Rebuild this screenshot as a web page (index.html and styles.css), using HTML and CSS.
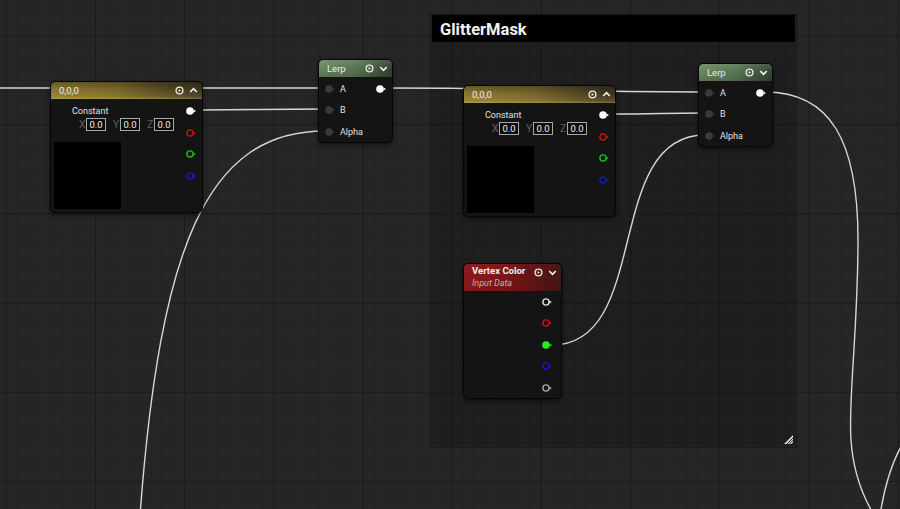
FILE: index.html
```html
<!DOCTYPE html>
<html>
<head>
<meta charset="utf-8">
<link rel="stylesheet" href="styles.css">
</head>
<body>
<div class="graph">
  <div class="group">
    <div class="group-head">GlitterMask</div>
    <svg class="grip" width="11" height="11" viewBox="0 0 11 11">
      <path d="M10 1 L10 10 L1 10 Z" fill="#d8d8d8"/>
      <path d="M3 11 L11 3 M5.5 11 L11 5.5 M8 11 L11 8" stroke="#1d1d1d" stroke-width="1"/>
    </svg>
  </div>

  <svg class="wires" width="900" height="509" viewBox="0 0 900 509">
    <g fill="none" stroke="#d6d6d6" stroke-width="1.4">
      <path d="M-10 88 L325 88"/>
      <path d="M196 110 C260 110 260 109 325 109"/>
      <path d="M325 131 C205 131 160 250 140 515"/>
      <path d="M386 88 C550 88 550 92 705 92"/>
      <path d="M609 114 C660 114 660 113 705 113"/>
      <path d="M552 345 C652 345 603 135 705 135"/>
      <path d="M765 92 C830 92 858 140 858 240 C858 330 848 400 851 440 C853 470 862 495 874 515"/>
      <path d="M905 440 C892 460 884 490 880 515"/>
    </g>
  </svg>

  <!-- Constant 3 vector #1 -->
  <div class="node cnode c1">
    <div class="head h-gold">
      <span class="title">0,0,0</span>
      <span class="icons">
        <svg width="9" height="9" viewBox="0 0 9 9"><circle cx="4.5" cy="4.5" r="3.4" fill="none" stroke="#e6e6e6" stroke-width="1.4"/><path d="M3.6 2.9 L6 4.5 L3.6 6.1 Z" fill="#e6e6e6"/></svg>
        <svg width="9" height="9" viewBox="0 0 9 9"><path d="M1.2 6 L4.5 2.7 L7.8 6" fill="none" stroke="#f0f0f0" stroke-width="1.7"/></svg>
      </span>
    </div>
    <div class="cbody">
      <div class="cleft">
        <div class="clabel">Constant</div>
        <div class="xyz">
          <span class="ax">X</span><span class="box">0.0</span>
          <span class="ax">Y</span><span class="box">0.0</span>
          <span class="ax">Z</span><span class="box last">0.0</span>
        </div>
        <div class="preview"></div>
      </div>
      <div class="pins">
        <svg class="pin" width="12" height="10" viewBox="0 0 12 10"><circle cx="5" cy="5" r="3.8" fill="#fff"/><path d="M8.6 3.4 L11 5 L8.6 6.6 Z" fill="#fff"/></svg>
        <svg class="pin" width="12" height="10" viewBox="0 0 12 10"><circle cx="5" cy="5" r="3.1" fill="none" stroke="#d01010" stroke-width="1.4"/><path d="M8.4 3.4 L10.8 5 L8.4 6.6 Z" fill="#d01010"/></svg>
        <svg class="pin" width="12" height="10" viewBox="0 0 12 10"><circle cx="5" cy="5" r="3.1" fill="none" stroke="#18c018" stroke-width="1.4"/><path d="M8.4 3.4 L10.8 5 L8.4 6.6 Z" fill="#18c018"/></svg>
        <svg class="pin" width="12" height="10" viewBox="0 0 12 10"><circle cx="5" cy="5" r="3.1" fill="none" stroke="#1818c8" stroke-width="1.4"/><path d="M8.4 3.4 L10.8 5 L8.4 6.6 Z" fill="#1818c8"/></svg>
      </div>
    </div>
  </div>

  <!-- Lerp #1 -->
  <div class="node lnode l1">
    <div class="head h-green">
      <span class="title">Lerp</span>
      <span class="icons">
        <svg width="9" height="9" viewBox="0 0 9 9"><circle cx="4.5" cy="4.5" r="3.4" fill="none" stroke="#e6e6e6" stroke-width="1.4"/><path d="M3.6 2.9 L6 4.5 L3.6 6.1 Z" fill="#e6e6e6"/></svg>
        <svg width="9" height="9" viewBox="0 0 9 9"><path d="M1.2 3 L4.5 6.3 L7.8 3" fill="none" stroke="#f0f0f0" stroke-width="1.7"/></svg>
      </span>
    </div>
    <div class="lbody">
      <div class="lrow">
        <svg class="pin" width="12" height="10" viewBox="0 0 12 10"><circle cx="5" cy="5" r="3.8" fill="#3a3a3a"/><path d="M8.6 3.6 L10.6 5 L8.6 6.4 Z" fill="#3a3a3a"/></svg>
        <span class="plabel">A</span>
        <svg class="pin out" width="12" height="10" viewBox="0 0 12 10"><circle cx="5" cy="5" r="3.8" fill="#fff"/><path d="M8.6 3.4 L11 5 L8.6 6.6 Z" fill="#fff"/></svg>
      </div>
      <div class="lrow">
        <svg class="pin" width="12" height="10" viewBox="0 0 12 10"><circle cx="5" cy="5" r="3.8" fill="#3a3a3a"/><path d="M8.6 3.6 L10.6 5 L8.6 6.4 Z" fill="#3a3a3a"/></svg>
        <span class="plabel">B</span>
      </div>
      <div class="lrow">
        <svg class="pin" width="12" height="10" viewBox="0 0 12 10"><circle cx="5" cy="5" r="3.8" fill="#3a3a3a"/><path d="M8.6 3.6 L10.6 5 L8.6 6.4 Z" fill="#3a3a3a"/></svg>
        <span class="plabel">Alpha</span>
      </div>
    </div>
  </div>

  <!-- Constant 3 vector #2 -->
  <div class="node cnode c2">
    <div class="head h-gold">
      <span class="title">0,0,0</span>
      <span class="icons">
        <svg width="9" height="9" viewBox="0 0 9 9"><circle cx="4.5" cy="4.5" r="3.4" fill="none" stroke="#e6e6e6" stroke-width="1.4"/><path d="M3.6 2.9 L6 4.5 L3.6 6.1 Z" fill="#e6e6e6"/></svg>
        <svg width="9" height="9" viewBox="0 0 9 9"><path d="M1.2 6 L4.5 2.7 L7.8 6" fill="none" stroke="#f0f0f0" stroke-width="1.7"/></svg>
      </span>
    </div>
    <div class="cbody">
      <div class="cleft">
        <div class="clabel">Constant</div>
        <div class="xyz">
          <span class="ax">X</span><span class="box">0.0</span>
          <span class="ax">Y</span><span class="box">0.0</span>
          <span class="ax">Z</span><span class="box last">0.0</span>
        </div>
        <div class="preview"></div>
      </div>
      <div class="pins">
        <svg class="pin" width="12" height="10" viewBox="0 0 12 10"><circle cx="5" cy="5" r="3.8" fill="#fff"/><path d="M8.6 3.4 L11 5 L8.6 6.6 Z" fill="#fff"/></svg>
        <svg class="pin" width="12" height="10" viewBox="0 0 12 10"><circle cx="5" cy="5" r="3.1" fill="none" stroke="#d01010" stroke-width="1.4"/><path d="M8.4 3.4 L10.8 5 L8.4 6.6 Z" fill="#d01010"/></svg>
        <svg class="pin" width="12" height="10" viewBox="0 0 12 10"><circle cx="5" cy="5" r="3.1" fill="none" stroke="#18c018" stroke-width="1.4"/><path d="M8.4 3.4 L10.8 5 L8.4 6.6 Z" fill="#18c018"/></svg>
        <svg class="pin" width="12" height="10" viewBox="0 0 12 10"><circle cx="5" cy="5" r="3.1" fill="none" stroke="#1818c8" stroke-width="1.4"/><path d="M8.4 3.4 L10.8 5 L8.4 6.6 Z" fill="#1818c8"/></svg>
      </div>
    </div>
  </div>

  <!-- Lerp #2 -->
  <div class="node lnode l2">
    <div class="head h-green">
      <span class="title">Lerp</span>
      <span class="icons">
        <svg width="9" height="9" viewBox="0 0 9 9"><circle cx="4.5" cy="4.5" r="3.4" fill="none" stroke="#e6e6e6" stroke-width="1.4"/><path d="M3.6 2.9 L6 4.5 L3.6 6.1 Z" fill="#e6e6e6"/></svg>
        <svg width="9" height="9" viewBox="0 0 9 9"><path d="M1.2 3 L4.5 6.3 L7.8 3" fill="none" stroke="#f0f0f0" stroke-width="1.7"/></svg>
      </span>
    </div>
    <div class="lbody">
      <div class="lrow">
        <svg class="pin" width="12" height="10" viewBox="0 0 12 10"><circle cx="5" cy="5" r="3.8" fill="#3a3a3a"/><path d="M8.6 3.6 L10.6 5 L8.6 6.4 Z" fill="#3a3a3a"/></svg>
        <span class="plabel">A</span>
        <svg class="pin out" width="12" height="10" viewBox="0 0 12 10"><circle cx="5" cy="5" r="3.8" fill="#fff"/><path d="M8.6 3.4 L11 5 L8.6 6.6 Z" fill="#fff"/></svg>
      </div>
      <div class="lrow">
        <svg class="pin" width="12" height="10" viewBox="0 0 12 10"><circle cx="5" cy="5" r="3.8" fill="#3a3a3a"/><path d="M8.6 3.6 L10.6 5 L8.6 6.4 Z" fill="#3a3a3a"/></svg>
        <span class="plabel">B</span>
      </div>
      <div class="lrow">
        <svg class="pin" width="12" height="10" viewBox="0 0 12 10"><circle cx="5" cy="5" r="3.8" fill="#3a3a3a"/><path d="M8.6 3.6 L10.6 5 L8.6 6.4 Z" fill="#3a3a3a"/></svg>
        <span class="plabel">Alpha</span>
      </div>
    </div>
  </div>

  <!-- Vertex Color -->
  <div class="node vnode">
    <div class="head h-red vhead">
      <div class="vtitles">
        <span class="title bold">Vertex Color</span>
        <span class="sub">Input Data</span>
      </div>
      <span class="icons">
        <svg width="9" height="9" viewBox="0 0 9 9"><circle cx="4.5" cy="4.5" r="3.4" fill="none" stroke="#e6e6e6" stroke-width="1.4"/><path d="M3.6 2.9 L6 4.5 L3.6 6.1 Z" fill="#e6e6e6"/></svg>
        <svg width="9" height="9" viewBox="0 0 9 9"><path d="M1.2 3 L4.5 6.3 L7.8 3" fill="none" stroke="#f0f0f0" stroke-width="1.7"/></svg>
      </span>
    </div>
    <div class="vbody">
      <div class="vrow"><svg class="pin" width="12" height="10" viewBox="0 0 12 10"><circle cx="5" cy="5" r="3.1" fill="none" stroke="#e0e0e0" stroke-width="1.4"/><path d="M8.4 3.4 L10.8 5 L8.4 6.6 Z" fill="#e0e0e0"/></svg></div>
      <div class="vrow"><svg class="pin" width="12" height="10" viewBox="0 0 12 10"><circle cx="5" cy="5" r="3.1" fill="none" stroke="#d01010" stroke-width="1.4"/><path d="M8.4 3.4 L10.8 5 L8.4 6.6 Z" fill="#d01010"/></svg></div>
      <div class="vrow"><svg class="pin" width="12" height="10" viewBox="0 0 12 10"><circle cx="5" cy="5" r="3.8" fill="#22ee22"/><path d="M8.6 3.4 L11 5 L8.6 6.6 Z" fill="#22ee22"/></svg></div>
      <div class="vrow"><svg class="pin" width="12" height="10" viewBox="0 0 12 10"><circle cx="5" cy="5" r="3.1" fill="none" stroke="#1818c8" stroke-width="1.4"/><path d="M8.4 3.4 L10.8 5 L8.4 6.6 Z" fill="#1818c8"/></svg></div>
      <div class="vrow"><svg class="pin" width="12" height="10" viewBox="0 0 12 10"><circle cx="5" cy="5" r="3.1" fill="none" stroke="#a8a8a8" stroke-width="1.4"/><path d="M8.4 3.4 L10.8 5 L8.4 6.6 Z" fill="#a8a8a8"/></svg></div>
    </div>
  </div>
</div>
</body>
</html>
```
FILE: styles.css
```css
html, body {
  margin: 0;
  padding: 0;
  background: #262626;
}
.graph {
  position: relative;
  width: 900px;
  height: 509px;
  overflow: hidden;
  font-family: Roboto, "Liberation Sans", sans-serif;
  color: #dcdcdc;
  background-color: #262626;
  background-image:
    linear-gradient(to right, #1b1b1b 1px, transparent 1px),
    linear-gradient(to bottom, #1b1b1b 1px, transparent 1px),
    linear-gradient(to right, #232323 1px, transparent 1px),
    linear-gradient(to bottom, #232323 1px, transparent 1px);
  background-size: 89.2px 89.2px, 89.2px 89.2px, 11.15px 11.15px, 11.15px 11.15px;
  background-position: 5.8px 35px, 5.8px 35px, 5.8px 35px, 5.8px 35px;
}

/* comment group */
.group {
  position: absolute;
  left: 430px;
  top: 14px;
  width: 367px;
  height: 434px;
  box-sizing: border-box;
  background: rgba(10, 10, 10, 0.26);
  border: 1px solid #181818;
  border-radius: 2px;
  box-shadow: inset 0 0 0 1px rgba(255,255,255,0.02);
}
.group-head {
  margin: 0 1px;
  height: 27px;
  background: #000;
  color: #f2f2f2;
  font-weight: 700;
  font-size: 16.5px;
  line-height: 29px;
  padding-left: 8px;
}
.grip {
  position: absolute;
  right: 2px;
  bottom: 2px;
}

.wires {
  position: absolute;
  left: 0;
  top: 0;
}

/* nodes */
.node {
  position: absolute;
  box-sizing: border-box;
  background: #141414;
  border: 1px solid #060606;
  border-radius: 5px;
  box-shadow: 0 2px 5px rgba(0,0,0,0.55);
  overflow: hidden;
}
.c1 { left: 50px; top: 81px; width: 153px; height: 132px; }
.c2 { left: 463px; top: 85px; width: 153px; height: 132px; }
.l1 { left: 318px; top: 59px; width: 75px; height: 84px; }
.l2 { left: 698px; top: 63px; width: 75px; height: 84px; }
.vnode { left: 463px; top: 263px; width: 99px; height: 136px; }

.head {
  display: flex;
  align-items: center;
  height: 17px;
  padding: 0 4px 0 8px;
  border-radius: 4px 4px 0 0;
}
.title {
  font-size: 9.5px;
  color: #ececec;
}
.title.bold { font-weight: 700; }
.icons {
  margin-left: auto;
  display: flex;
  align-items: center;
  gap: 5px;
}
.icons svg { display: block; }

.h-gold {
  background:
    linear-gradient(to bottom, rgba(0,0,0,0.25), rgba(0,0,0,0) 45%, rgba(255,225,120,0.12) 85%, rgba(255,220,110,0.35)),
    linear-gradient(to right, #8a772f, #776628 45%, #4a3f20 85%, #3a3320);
}
.h-green {
  background:
    linear-gradient(to bottom, rgba(255,255,255,0.1), rgba(0,0,0,0) 40%, rgba(0,0,0,0.15)),
    linear-gradient(to right, #6a8a63, #5a7754 50%, #3e4f3b 90%, #36443a);
}
.h-red {
  background:
    linear-gradient(to bottom, rgba(0,0,0,0.05), rgba(0,0,0,0.15)),
    linear-gradient(to right, #9a1d1d, #861818 45%, #5a1616 85%, #4a1a1a);
}
.vhead {
  height: 27px;
  align-items: flex-start;
  padding-top: 1px;
  box-sizing: border-box;
}
.vhead .icons { margin-top: 3px; }
.vtitles {
  display: flex;
  flex-direction: column;
  line-height: 12px;
}
.sub {
  font-size: 9px;
  font-style: italic;
  color: #d6a6a6;
}

/* constant body */
.cbody {
  display: flex;
  justify-content: space-between;
  padding: 5px 5px 0 3px;
}
.cleft {
  display: flex;
  flex-direction: column;
}
.clabel {
  height: 14px;
  line-height: 14px;
  margin-left: 18px;
  font-size: 9px;
  color: #e0e0e0;
}
.xyz {
  display: flex;
  align-items: center;
  height: 13px;
  margin-left: 25px;
}
.ax {
  width: 7px;
  font-size: 10.5px;
  color: #5e5e5e;
}
.box {
  box-sizing: border-box;
  width: 20px;
  height: 13px;
  border: 1px solid #a8a8a8;
  background: #0c0c0c;
  color: #f0f0f0;
  font-size: 9.5px;
  line-height: 11px;
  text-align: center;
  margin-right: 7px;
}
.box.last { margin-right: 0; }
.preview {
  margin-top: 11px;
  width: 67px;
  height: 67px;
  background: #000;
}
.pins {
  display: flex;
  flex-direction: column;
  gap: 11.5px;
  padding-top: 2px;
}
.pin { display: block; }

/* lerp body */
.lbody {
  padding-top: 1px;
}
.lrow {
  display: flex;
  align-items: center;
  height: 21.5px;
  padding: 0 5px;
}
.plabel {
  margin-left: 4px;
  font-size: 9px;
  color: #e0e0e0;
}
.pin.out { margin-left: auto; }

/* vertex body */
.vbody {
  display: flex;
  flex-direction: column;
}
.vrow {
  display: flex;
  justify-content: flex-end;
  align-items: center;
  height: 21.5px;
  padding-right: 8px;
}
```
